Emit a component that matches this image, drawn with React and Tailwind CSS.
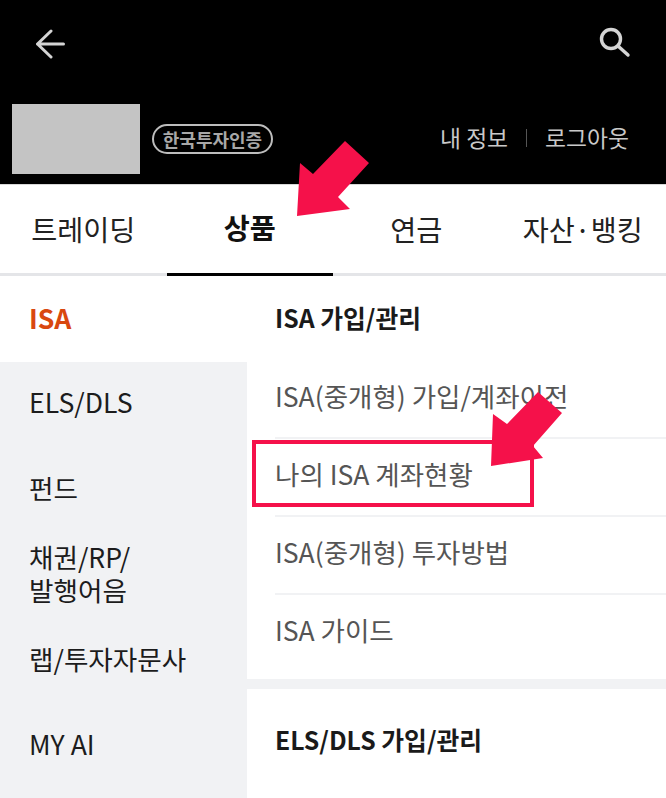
import React from 'react';

const font = { fontFamily: '"Noto Sans CJK KR", "Noto Sans", sans-serif' };

const tabs = ['트레이딩', '상품', '연금', '자산·뱅킹'];
const sideItems = ['ELS/DLS', '펀드', '채권/RP/\n발행어음', '랩/투자자문사', 'MY AI'];
const isaLinks = ['ISA(중개형) 가입/계좌이전', '나의 ISA 계좌현황', 'ISA(중개형) 투자방법', 'ISA 가이드'];

export default function App() {
  return (
    <div className="relative h-[798px] w-[666px] overflow-hidden bg-white" style={font}>
      <header className="h-[184px] bg-black">
        <div className="flex h-[104px] items-start justify-between pl-[36px] pr-[35px] pt-[29px]">
          <svg width="29" height="30" viewBox="0 0 29 30" fill="none" stroke="#d4d4d4" strokeWidth="3" strokeLinecap="round" strokeLinejoin="round">
            <path d="M1.5 15H27.5M15 2L1.5 15L15 28" />
          </svg>
          <svg width="32" height="32" viewBox="0 0 32 32" fill="none" stroke="#d4d4d4" strokeWidth="3.4" strokeLinecap="round" className="-mt-[3px]">
            <circle cx="12" cy="13" r="9.5" />
            <path d="M19 20L29 29" />
          </svg>
        </div>
        <div className="flex items-center pl-3 pr-[37px]">
          <div className="h-[70px] w-[128px] bg-[#c4c4c4]" />
          <span className="ml-3 flex h-[30px] w-[121px] items-center justify-center rounded-full border-2 border-[#bdbdbd] text-[18px] font-bold text-[#a8a8a8]">한국투자인증</span>
          <div className="ml-auto flex items-center pb-[2px] text-[22.8px] text-[#c9c9c9]">
            <span>내 정보</span>
            <span className="mx-[18px] h-[18px] w-px bg-[#555555]" />
            <span>로그아웃</span>
          </div>
        </div>
      </header>

      <nav className="grid h-[92px] grid-cols-4 border-b-[3px] border-t border-[#e4e5e8] border-t-[#d8d8d8]">
        {tabs.map((tab) => (
          <div
            key={tab}
            className={tab === '상품'
              ? 'flex h-[91px] items-center justify-center border-b-[3px] border-black pb-[3px] text-[28.3px] font-bold text-[#111111]'
              : 'flex h-[88px] items-center justify-center text-[28.3px] text-[#222222]'}
          >
            {tab}
          </div>
        ))}
      </nav>

      <div className="flex">
        <aside className="w-[247px] shrink-0 text-[26.6px] leading-[33px] text-[#1c1c1c]">
          <div className="flex h-[86px] items-center pb-[4px] pl-[29px] font-bold text-[#d9480f]">ISA</div>
          <div className="h-[500px] bg-[#f1f2f4]">
            {sideItems.map((item) => (
              <div key={item} className="flex h-[85.5px] items-center whitespace-pre-line pb-[6px] pl-[29px]">
                {item}
              </div>
            ))}
          </div>
        </aside>

        <main className="flex-1 bg-[#f1f2f4]">
          <section className="bg-white pl-7">
            <h2 className="flex h-[86px] items-center pb-[2px] text-[24.8px] font-bold text-[#1a1a1a]">ISA 가입/관리</h2>
            <ul className="-mt-[1px] text-[26.5px] text-[#555555]">
              {isaLinks.map((link, i) => (
                <li
                  key={link}
                  className={i < 3
                    ? 'flex h-[78px] items-center border-b-2 border-[#f1f2f4] pb-[6px]'
                    : 'flex h-[84px] items-start pt-[15px]'}
                >
                  {link}
                </li>
              ))}
            </ul>
          </section>
          <section className="mt-[10px] bg-white pl-7">
            <h2 className="flex h-[109px] items-center pb-[7px] text-[24.8px] font-bold text-[#1a1a1a]">ELS/DLS 가입/관리</h2>
          </section>
        </main>
      </div>

      {/* annotations on top of the screenshot */}
      <div className="absolute left-[252px] top-[440px] h-[67px] w-[282px] border-4 border-[#f5114a]" />
      <svg className="absolute left-0 top-0" width="666" height="798" fill="#f5114a">
        <polygon points="300,163 313,174 345,141 369,163 338,197 350,209 297,216" />
        <polygon points="493,414 507,424 538,392 562,413 533,446 543,458 491,466" />
      </svg>
    </div>
  );
}
